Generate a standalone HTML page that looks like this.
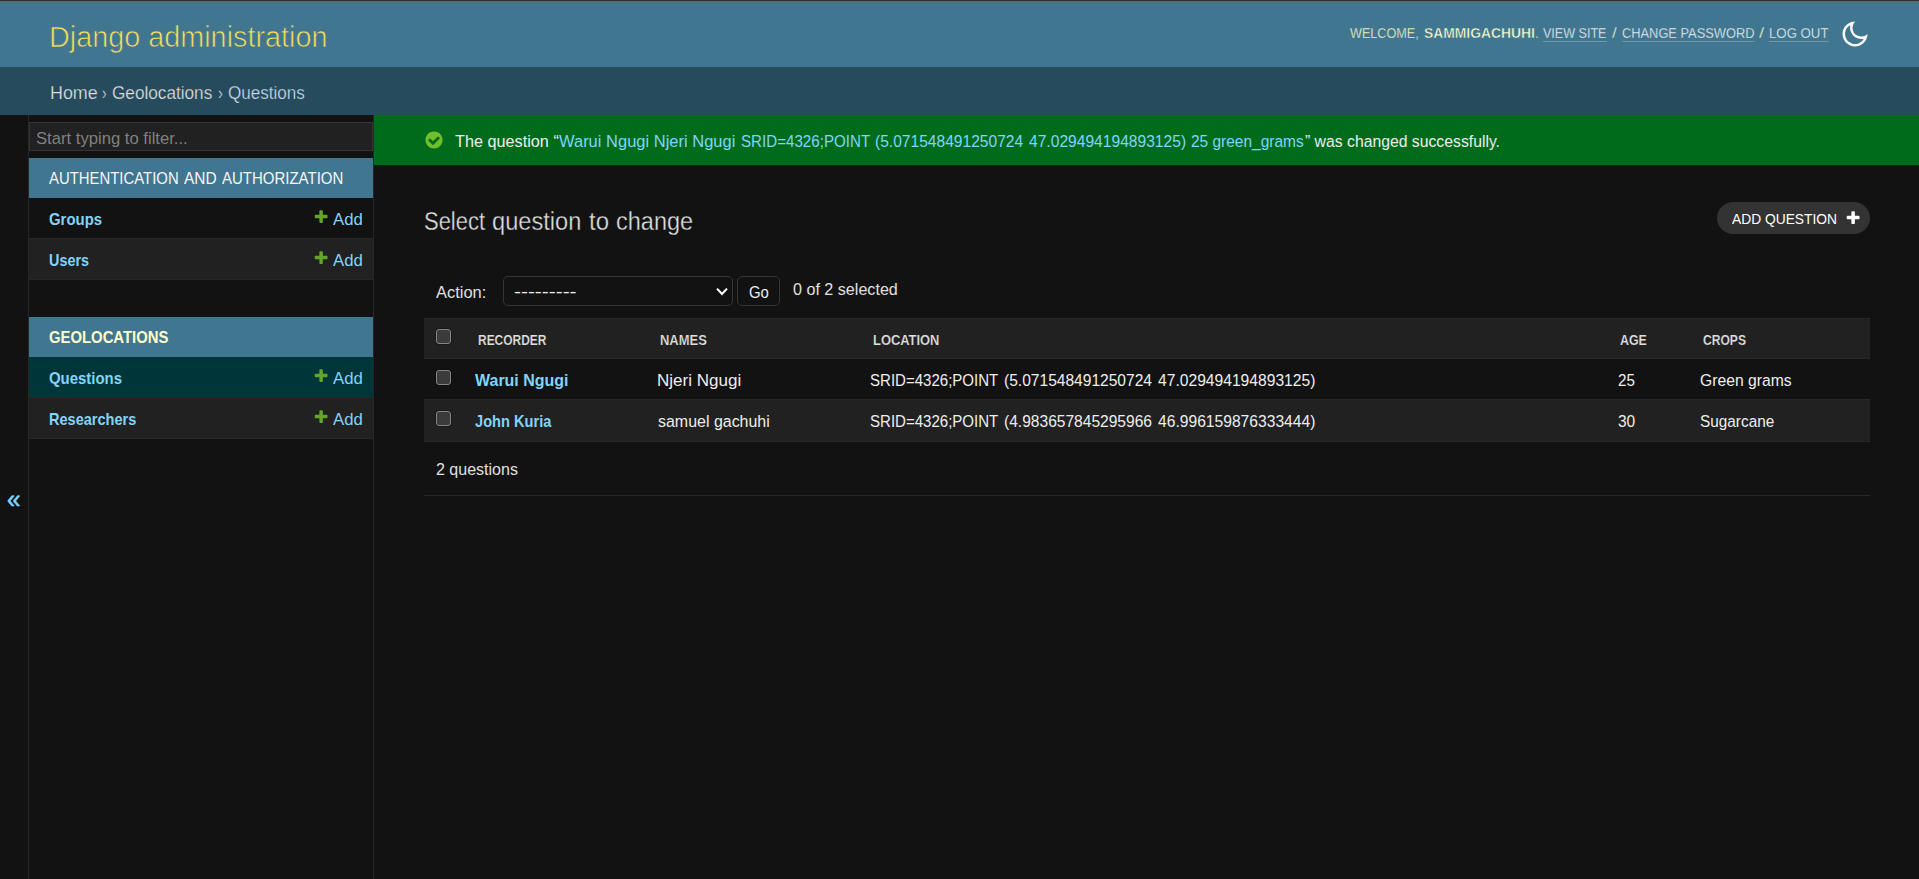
<!DOCTYPE html>
<html lang="en">
<head>
<meta charset="utf-8">
<title>Select question to change | Django site admin</title>
<style>
html,body{margin:0;padding:0}
html{background:#121212}
body{width:1919px;height:879px;overflow:hidden;position:relative;background:#121212;color:#eee;font-family:"Liberation Sans",sans-serif;font-size:16.25px}
a{text-decoration:none}
h1{margin:0;font-weight:400}
.abs{position:absolute}
.t{position:absolute;white-space:nowrap;line-height:1;transform-origin:0 0;display:block;font-weight:400;font-style:normal}
#header{position:absolute;left:0;top:0;width:1919px;height:67px;background:#417690}
#topline{position:absolute;left:0;top:0;width:1919px;height:2px;background:linear-gradient(#303030 0,#303030 1px,#60666a 1px,#60666a 2px);z-index:5}
.ul::after{content:"";position:absolute;left:0;right:0;top:14.14px;height:1px;background:rgba(255,255,255,.25)}
#breadcrumbs{position:absolute;left:0;top:67px;width:1919px;height:48px;background:#264b5d}
#toggle{position:absolute;left:0;top:115px;width:28px;height:764px;border-right:1px solid #272727;background:#121212}
#nav-sidebar{position:absolute;left:29px;top:115px;width:344px;height:764px;border-right:1px solid #272727;background:#121212}
#nav-filter{position:absolute;left:0;top:7px;width:344px;height:29px;box-sizing:border-box;border:1px solid #353535;background:#212121;margin:0;padding:0;border-radius:0;outline:0;color:#eee}
.module{position:absolute;left:0;width:344px;border-collapse:collapse;border-spacing:0;table-layout:fixed}
.module caption{height:40px;background:#417690;position:relative;padding:0}
.module th,.module td{padding:0;height:40px;border-bottom:1px solid #272727;position:relative;font-weight:400}
.module th{width:271px}
.module tr.row2 th,.module tr.row2 td{background:#212121}
.module tr.cur th,.module tr.cur td{background:#00363a}
.plus{position:absolute;width:16.25px;height:16.25px}
#messages{position:absolute;left:374px;top:115px;width:1545px;height:50px;background:#006b1b;margin:0;padding:0;list-style:none}
#messages li{margin:0;padding:0}
#content{position:absolute;left:374px;top:165px;width:1545px;height:714px}
#addbtn{position:absolute;left:1343px;top:37px;width:153px;height:32px;border-radius:16px;background:#333}
#sel{position:absolute;left:129px;top:111px;width:230px;height:30px;box-sizing:border-box;border:1px solid #353535;border-radius:5px;background:#121212}
#go{margin:0;padding:0;font:inherit;position:absolute;left:363px;top:111px;width:43px;height:30px;box-sizing:border-box;border:1px solid #353535;border-radius:5px;background:#121212}
#result{position:absolute;left:50px;top:153px;width:1446px;border-collapse:collapse;border-spacing:0;table-layout:fixed}
#result th,#result td{padding:0;height:40px;border-bottom:1px solid #272727;position:relative;font-weight:400}
#result thead th{background:#212121;height:39px;border-top:1px solid #272727}
#result tr.row2 th,#result tr.row2 td{background:#212121}
#result tr.last th,#result tr.last td{height:41px}
.cb{-webkit-appearance:none;appearance:none;margin:0;padding:0;box-sizing:content-box;position:absolute;left:12px;width:13px;height:13px;border:1px solid #858585;border-radius:3px;background:#3b3b3b;box-shadow:0 0 0 1px rgba(0,0,0,.25)}
#paginator{margin:0;padding:0;position:absolute;left:50px;top:277px;width:1446px;height:53px;border-bottom:1px solid #272727}
</style>
</head>
<body>
<div id="topline"></div>
<header id="header">
  <div id="branding"><a class="t" href="#" style="left:49.38px;top:22.00px;font-size:30px;color:#f5dd5d;transform:scaleX(0.9596);-webkit-text-stroke:0.7px #417690">Django administration</a></div>
  <div id="user-tools"><span class="t"  style="left:1350.30px;top:26.50px;font-size:13.75px;color:#ffffcc;transform:scaleX(0.9183);-webkit-text-stroke:0.3px #417690">WELCOME,</span>
<strong class="t"  style="left:1424.30px;top:26.50px;font-size:13.75px;color:#ffffcc;transform:scaleX(1.0067);font-weight:700;-webkit-text-stroke:0.45px #417690">SAMMIGACHUHI</strong>
<span class="t"  style="left:1535.00px;top:26.50px;font-size:13.75px;color:#ffffcc;transform:scaleX(1.0000);-webkit-text-stroke:0.3px #417690">.</span>
<a class="t ul" href="#" style="left:1543.00px;top:26.50px;font-size:13.75px;color:#f7f7f7;transform:scaleX(0.9127);-webkit-text-stroke:0.3px #417690">VIEW SITE</a>
<span class="t"  style="left:1611.70px;top:26.50px;font-size:13.75px;color:#ffffcc;transform:scaleX(1.2500);-webkit-text-stroke:0.3px #417690">/</span>
<a class="t ul" href="#" style="left:1622.10px;top:26.50px;font-size:13.75px;color:#f7f7f7;transform:scaleX(0.9337);-webkit-text-stroke:0.3px #417690">CHANGE PASSWORD</a>
<span class="t"  style="left:1759.20px;top:26.50px;font-size:13.75px;color:#ffffcc;transform:scaleX(1.3500);-webkit-text-stroke:0.3px #417690">/</span>
<a class="t ul" href="#" style="left:1768.94px;top:26.50px;font-size:13.75px;color:#f7f7f7;transform:scaleX(0.9612);-webkit-text-stroke:0.3px #417690">LOG OUT</a>
    <svg class="abs" style="left:1840px;top:19px" width="30" height="30" viewBox="0 0 24 24"><path fill="#f7f7f7" d="M10 7a7 7 0 0 0 12 4.9v.1c0 5.523-4.477 10-10 10S2 17.523 2 12 6.477 2 12 2h.1A6.979 6.979 0 0 0 10 7zm-6 5a8 8 0 0 0 15.062 3.762A9 9 0 0 1 8.238 4.938 7.999 7.999 0 0 0 4 12z"/></svg>
  </div>
</header>
<nav id="breadcrumbs"><a class="t" href="#" style="left:49.78px;top:18.30px;font-size:17.5px;color:#e0e0e0;transform:scaleX(1.0212);-webkit-text-stroke:0.25px #264b5d">Home</a>
<span class="t"  style="left:102.00px;top:18.30px;font-size:17.5px;color:#c4dce8;transform:scaleX(0.7833);-webkit-text-stroke:0.25px #264b5d">›</span>
<a class="t" href="#" style="left:112.00px;top:18.30px;font-size:17.5px;color:#e0e0e0;transform:scaleX(0.9815);-webkit-text-stroke:0.25px #264b5d">Geolocations</a>
<span class="t"  style="left:218.00px;top:18.30px;font-size:17.5px;color:#c4dce8;transform:scaleX(0.8333);-webkit-text-stroke:0.25px #264b5d">›</span>
<span class="t"  style="left:228.00px;top:18.30px;font-size:17.5px;color:#c4dce8;transform:scaleX(0.9742);-webkit-text-stroke:0.25px #264b5d">Questions</span></nav>
<button id="toggle" style="padding:0;border-top:0;border-left:0;border-bottom:0;margin:0;font:inherit;box-sizing:content-box"><span class="t"  style="left:6.88px;top:372.00px;font-size:25px;color:#81d4fa;transform:scaleX(0.9708);-webkit-text-stroke:0.5px #81d4fa">«</span></button>
<nav id="nav-sidebar">
  <input id="nav-filter" type="text" aria-label="Filter navigation items">
  <label for="nav-filter"><span class="t ph"  style="left:6.80px;top:15.30px;font-size:16.25px;color:#808080;transform:scaleX(1.0243)">Start typing to filter...</span></label>
  <table class="module" style="top:43px">
    <caption><a href="#"><span class="t"  style="left:19.70px;top:12.20px;font-size:16.25px;color:#f7f7f7;transform:scaleX(0.9169)">AUTHENTICATION</span>
<span class="t"  style="left:154.70px;top:12.20px;font-size:16.25px;color:#f7f7f7;transform:scaleX(0.9501)">AND</span>
<span class="t"  style="left:193.20px;top:12.20px;font-size:16.25px;color:#f7f7f7;transform:scaleX(0.9223)">AUTHORIZATION</span></a></caption>
    <tr><th><a class="t" href="#" style="left:20.00px;top:12.70px;font-size:16.25px;color:#81d4fa;transform:scaleX(0.9179);font-weight:700">Groups</a></th><td><svg class="plus" style="left:12.8px;top:10.8px" viewBox="0 0 1792 1792"><path fill="#62a528" d="M1600 736v192q0 40-28 68t-68 28h-416v416q0 40-28 68t-68 28h-192q-40 0-68-28t-28-68v-416h-416q-40 0-68-28t-28-68v-192q0-40 28-68t68-28h416v-416q0-40 28-68t68-28h192q40 0 68 28t28 68v416h416q40 0 68 28t28 68z"/></svg><a class="t" href="#" style="left:33.20px;top:12.70px;font-size:16.25px;color:#81d4fa;transform:scaleX(1.0296)">Add</a></td></tr>
    <tr class="row2"><th><a class="t" href="#" style="left:20.00px;top:12.70px;font-size:16.25px;color:#81d4fa;transform:scaleX(0.8862);font-weight:700">Users</a></th><td><svg class="plus" style="left:12.8px;top:10.8px" viewBox="0 0 1792 1792"><path fill="#62a528" d="M1600 736v192q0 40-28 68t-68 28h-416v416q0 40-28 68t-68 28h-192q-40 0-68-28t-28-68v-416h-416q-40 0-68-28t-28-68v-192q0-40 28-68t68-28h416v-416q0-40 28-68t68-28h192q40 0 68 28t28 68v416h416q40 0 68 28t28 68z"/></svg><a class="t" href="#" style="left:33.20px;top:12.70px;font-size:16.25px;color:#81d4fa;transform:scaleX(1.0296)">Add</a></td></tr>
  </table>
  <table class="module" style="top:202px">
    <caption><a class="t" href="#" style="left:20.00px;top:11.70px;font-size:16.25px;color:#ffffcc;transform:scaleX(0.9139);font-weight:700">GEOLOCATIONS</a></caption>
    <tr class="cur"><th><a class="t" href="#" style="left:20.00px;top:12.60px;font-size:16.25px;color:#81d4fa;transform:scaleX(0.9192);font-weight:700">Questions</a></th><td><svg class="plus" style="left:12.8px;top:10.8px" viewBox="0 0 1792 1792"><path fill="#62a528" d="M1600 736v192q0 40-28 68t-68 28h-416v416q0 40-28 68t-68 28h-192q-40 0-68-28t-28-68v-416h-416q-40 0-68-28t-28-68v-192q0-40 28-68t68-28h416v-416q0-40 28-68t68-28h192q40 0 68 28t28 68v416h416q40 0 68 28t28 68z"/></svg><a class="t" href="#" style="left:33.20px;top:12.60px;font-size:16.25px;color:#81d4fa;transform:scaleX(1.0296)">Add</a></td></tr>
    <tr class="row2"><th><a class="t" href="#" style="left:19.81px;top:12.60px;font-size:16.25px;color:#81d4fa;transform:scaleX(0.8940);font-weight:700">Researchers</a></th><td><svg class="plus" style="left:12.8px;top:10.8px" viewBox="0 0 1792 1792"><path fill="#62a528" d="M1600 736v192q0 40-28 68t-68 28h-416v416q0 40-28 68t-68 28h-192q-40 0-68-28t-28-68v-416h-416q-40 0-68-28t-28-68v-192q0-40 28-68t68-28h416v-416q0-40 28-68t68-28h192q40 0 68 28t28 68v416h416q40 0 68 28t28 68z"/></svg><a class="t" href="#" style="left:33.20px;top:12.60px;font-size:16.25px;color:#81d4fa;transform:scaleX(1.0296)">Add</a></td></tr>
  </table>
</nav>
<ul id="messages"><li class="success">
  <svg class="abs" style="left:50px;top:15px" width="20" height="20" viewBox="0 0 1792 1792"><path fill="#70bf2b" d="M1412 734q0-28-18-46l-91-90q-19-19-45-19t-45 19l-408 407-226-226q-19-19-45-19t-45 19l-91 90q-18 18-18 46 0 27 18 45l362 362q19 19 45 19 27 0 46-19l543-543q18-18 18-45zm252 162q0 209-103 385.500t-279.500 279.500-385.500 103-385.500-103-279.500-279.500-103-385.500 103-385.500 279.500-279.500 385.500-103 385.500 103 279.500 279.500 103 385.500z"/></svg>
  <span class="t"  style="left:80.90px;top:18.20px;font-size:16.25px;color:#eeeeee;transform:scaleX(0.9993)">The question “</span>
<a class="t" href="#" style="left:185.30px;top:18.20px;font-size:16.25px;color:#81d4fa;transform:scaleX(1.0151)">Warui Ngugi Njeri Ngugi</a>
<a class="t" href="#" style="left:366.80px;top:18.20px;font-size:16.25px;color:#81d4fa;transform:scaleX(0.9315)">SRID=4326;POINT</a>
<a class="t" href="#" style="left:500.84px;top:18.20px;font-size:16.25px;color:#81d4fa;transform:scaleX(0.9590)">(5.071548491250724</a>
<a class="t" href="#" style="left:654.80px;top:18.20px;font-size:16.25px;color:#81d4fa;transform:scaleX(0.9605)">47.029494194893125)</a>
<a class="t" href="#" style="left:816.80px;top:18.20px;font-size:16.25px;color:#81d4fa;transform:scaleX(0.9517)">25 green_grams</a>
<span class="t"  style="left:931.00px;top:18.20px;font-size:16.25px;color:#eeeeee;transform:scaleX(0.9696)">” was changed successfully.</span>
</li></ul>
<main id="content">
  <h1><span class="t"  style="left:49.62px;top:44.00px;font-size:25px;color:#e0e0e0;transform:scaleX(0.8784);-webkit-text-stroke:0.35px #121212">Select</span>
<span class="t"  style="left:117.56px;top:44.00px;font-size:25px;color:#e0e0e0;transform:scaleX(0.9448);-webkit-text-stroke:0.35px #121212">question</span>
<span class="t"  style="left:215.20px;top:44.00px;font-size:25px;color:#e0e0e0;transform:scaleX(0.9576);-webkit-text-stroke:0.35px #121212">to</span>
<span class="t"  style="left:242.26px;top:44.00px;font-size:25px;color:#e0e0e0;transform:scaleX(0.9399);-webkit-text-stroke:0.35px #121212">change</span></h1>
  <a id="addbtn" href="#"><span class="t"  style="left:15.30px;top:11.00px;font-size:13.75px;color:#ffffff;transform:scaleX(1.0035)">ADD QUESTION</span></a>
  <svg class="plus" style="left:1471.2px;top:44.5px" viewBox="0 0 1792 1792"><path fill="#ffffff" d="M1600 736v192q0 40-28 68t-68 28h-416v416q0 40-28 68t-68 28h-192q-40 0-68-28t-28-68v-416h-416q-40 0-68-28t-28-68v-192q0-40 28-68t68-28h416v-416q0-40 28-68t68-28h192q40 0 68 28t28 68v416h416q40 0 68 28t28 68z"/></svg>
  <div class="actions">
  <label class="t"  style="left:62.20px;top:118.60px;font-size:16.25px;color:#e0e0e0;transform:scaleX(1.0109)">Action:</label>
<span class="t"  style="left:419.00px;top:116.00px;font-size:16.25px;color:#e0e0e0;transform:scaleX(0.9918)">0 of 2 selected</span>
  <div id="sel" role="combobox" aria-label="Action"><span class="t"  style="left:10.30px;top:5.60px;font-size:16.25px;color:#eeeeee;transform:scaleX(1.2839)">---------</span></div>
  <svg class="abs" style="left:340px;top:121px" width="16" height="12" viewBox="0 0 16 12"><path d="M3 2.6 L8 7.9 L13 2.6" fill="none" stroke="#fff" stroke-width="2.1"/></svg>
  <button id="go" type="submit"><span class="t"  style="left:10.80px;top:6.60px;font-size:16.25px;color:#eeeeee;transform:scaleX(0.9150)">Go</span></button>
  </div>
  <table id="result">
    <colgroup><col style="width:41px"><col style="width:183px"><col style="width:212px"><col style="width:748px"><col style="width:82px"><col style="width:180px"></colgroup>
    <thead><tr>
      <th><input type="checkbox" class="cb" style="top:10px" aria-label="Select all"></th><th><span class="t"  style="left:12.60px;top:15.20px;font-size:13.75px;color:#e0e0e0;transform:scaleX(0.8698);font-weight:700;-webkit-text-stroke:0.2px #212121">RECORDER</span></th><th><span class="t"  style="left:12.30px;top:15.20px;font-size:13.75px;color:#e0e0e0;transform:scaleX(0.9437);font-weight:700;-webkit-text-stroke:0.2px #212121">NAMES</span></th><th><span class="t"  style="left:12.80px;top:15.20px;font-size:13.75px;color:#e0e0e0;transform:scaleX(0.9378);font-weight:700;-webkit-text-stroke:0.2px #212121">LOCATION</span></th><th><span class="t"  style="left:12.30px;top:15.20px;font-size:13.75px;color:#e0e0e0;transform:scaleX(0.9013);font-weight:700;-webkit-text-stroke:0.2px #212121">AGE</span></th><th><span class="t"  style="left:12.60px;top:15.20px;font-size:13.75px;color:#e0e0e0;transform:scaleX(0.8784);font-weight:700;-webkit-text-stroke:0.2px #212121">CROPS</span></th>
    </tr></thead>
    <tbody>
    <tr><td><input type="checkbox" class="cb" style="top:11px" aria-label="Select row"></td><th><a class="t" href="#" style="left:10.00px;top:13.00px;font-size:16.25px;color:#81d4fa;transform:scaleX(0.9834);font-weight:700">Warui Ngugi</a></th><td><span class="t"  style="left:8.95px;top:13.00px;font-size:16.25px;color:#eeeeee;transform:scaleX(1.0474)">Njeri Ngugi</span></td><td><span class="t"  style="left:10.00px;top:13.00px;font-size:16.25px;color:#eeeeee;transform:scaleX(0.9250)">SRID=4326;POINT</span>
<span class="t"  style="left:144.04px;top:13.00px;font-size:16.25px;color:#eeeeee;transform:scaleX(0.9577)">(5.071548491250724</span>
<span class="t"  style="left:297.50px;top:13.00px;font-size:16.25px;color:#eeeeee;transform:scaleX(0.9623)">47.029494194893125)</span></td><td><span class="t"  style="left:10.30px;top:13.00px;font-size:16.25px;color:#eeeeee;transform:scaleX(0.9369)">25</span></td><td><span class="t"  style="left:10.00px;top:13.00px;font-size:16.25px;color:#eeeeee;transform:scaleX(0.9662)">Green grams</span></td></tr>
    <tr class="row2 last"><td><input type="checkbox" class="cb" style="top:11px" aria-label="Select row"></td><th><a class="t" href="#" style="left:10.00px;top:13.00px;font-size:16.25px;color:#81d4fa;transform:scaleX(0.8994);font-weight:700">John Kuria</a></th><td><span class="t"  style="left:10.00px;top:13.00px;font-size:16.25px;color:#eeeeee;transform:scaleX(0.9822)">samuel gachuhi</span></td><td><span class="t"  style="left:10.00px;top:13.00px;font-size:16.25px;color:#eeeeee;transform:scaleX(0.9250)">SRID=4326;POINT</span>
<span class="t"  style="left:144.04px;top:13.00px;font-size:16.25px;color:#eeeeee;transform:scaleX(0.9577)">(4.983657845295966</span>
<span class="t"  style="left:297.50px;top:13.00px;font-size:16.25px;color:#eeeeee;transform:scaleX(0.9623)">46.996159876333444)</span></td><td><span class="t"  style="left:10.30px;top:13.00px;font-size:16.25px;color:#eeeeee;transform:scaleX(0.9536)">30</span></td><td><span class="t"  style="left:10.00px;top:13.00px;font-size:16.25px;color:#eeeeee;transform:scaleX(0.9445)">Sugarcane</span></td></tr>
    </tbody>
  </table>
  <p id="paginator"><span class="t"  style="left:12.30px;top:18.75px;font-size:16.25px;color:#e0e0e0;transform:scaleX(0.9857)">2 questions</span></p>
</main>
</body>
</html>
